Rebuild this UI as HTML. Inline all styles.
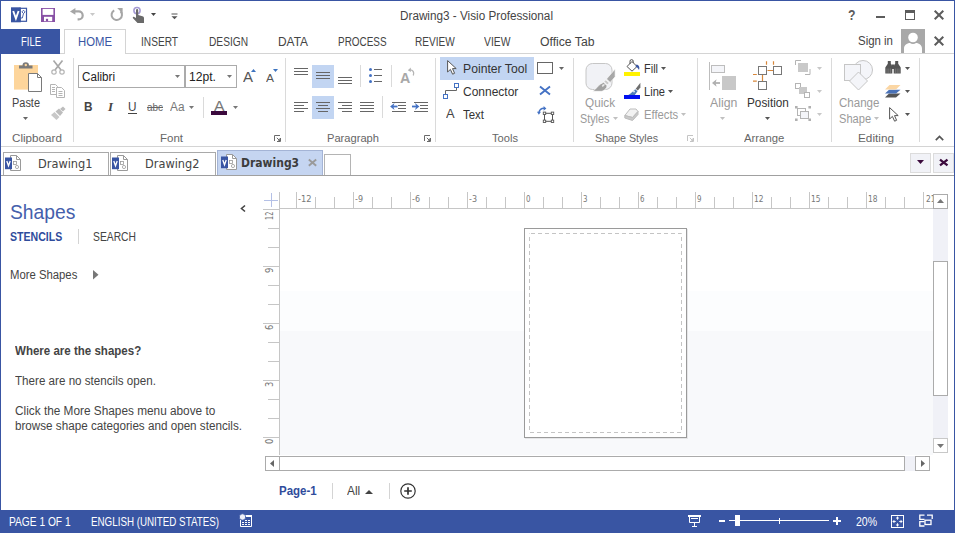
<!DOCTYPE html>
<html lang="en"><head><meta charset="utf-8"><title>Drawing3 - Visio Professional</title>
<style>
html,body{margin:0;padding:0}
body{width:955px;height:533px;overflow:hidden;background:#fff;position:relative;font-family:"Liberation Sans", sans-serif;font-size:12px;color:#444}
body div,body svg,body span{position:absolute;box-sizing:border-box}
svg{overflow:visible;display:block}
.t{white-space:nowrap;line-height:1;transform-origin:0 50%;display:block}
</style></head>
<body>
<div style="left:0px;top:0px;width:955px;height:1px;background:#3955a3"></div>
<div style="left:0px;top:0px;width:1px;height:533px;background:#3955a3"></div>
<div style="left:954px;top:0px;width:1px;height:533px;background:#3955a3"></div>
<svg style="left:11px;top:7px" width="16" height="16" viewBox="0 0 16 16"><rect x="9" y="1.300" width="6.500" height="13" fill="#fff" stroke="#3955a3" stroke-width="1.200"/><path d="M12.500 3.200l1.600 1.700-1.600 1.700-1.600-1.700zM12.500 6.600L11.300 11H9.500" fill="none" stroke="#3955a3" stroke-width="0.900"/><rect x="0" y="0.300" width="9.800" height="15" fill="#3955a3"/><path d="M2.200 4L4.900 11.500 7.600 4" fill="none" stroke="#fff" stroke-width="1.900"/></svg>
<svg style="left:41px;top:8px" width="14" height="14" viewBox="0 0 14 14"><path d="M0 0H14V14H0Z" fill="#8850a5"/><rect x="1.600" y="0.900" width="10.800" height="6" fill="#fff"/><rect x="3" y="8.800" width="8.200" height="4.400" fill="#fff"/><rect x="4.900" y="10.800" width="2.200" height="2.400" fill="#8850a5"/></svg>
<svg style="left:70px;top:8px" width="14" height="13" viewBox="0 0 14 13"><path d="M4 3.400H8.700a4 4 0 0 1 0 8H7.600" fill="none" stroke="#a6a6a6" stroke-width="2.200"/><path d="M0 3.400L5.400 0V6.800Z" fill="#a6a6a6"/></svg>
<svg style="left:90.0px;top:12.5px" width="5" height="3" viewBox="0 0 5 3"><path d="M0 0H5L2.5 3Z" fill="#c8c8c8"/></svg>
<svg style="left:110px;top:8px" width="13" height="13" viewBox="0 0 13 13"><path d="M4.2 2.3A5.2 5.2 0 1 0 10.5 3.2" fill="none" stroke="#a6a6a6" stroke-width="2"/><path d="M7.2 0H12.6V5.4Z" fill="#a6a6a6"/></svg>
<svg style="left:132px;top:7px" width="13" height="16" viewBox="0 0 13 16"><circle cx="5" cy="3.6" r="3.100" fill="none" stroke="#a59bd4" stroke-width="1.600"/><path d="M4 3.2a1.1 1.1 0 0 1 2.2 0V8l4.2 1.2c1.2.4 1.6 1 1.6 2V16H5.5L1 11.2c-.6-.8.2-1.8 1.2-1.2L4 11Z" fill="#6a6a6a"/></svg>
<svg style="left:151.0px;top:13.0px" width="5" height="3" viewBox="0 0 5 3"><path d="M0 0H5L2.5 3Z" fill="#444"/></svg>
<svg style="left:170.5px;top:12.8px" width="7" height="7" viewBox="0 0 7 7"><rect x="0.5" y="0.5" width="6" height="1" fill="#555"/><path d="M0.5 3.2H6.5L3.5 6.2Z" fill="#555"/></svg>
<span class="t" style="left:400px;top:10.00px;font-size:12.5px;color:#444;transform:scaleX(0.9384);">Drawing3 - Visio Professional</span>
<span class="t" style="left:848px;top:8.00px;font-size:14px;color:#5c5c5c;font-weight:700;transform:scaleX(0.8759);">?</span>
<div style="left:876px;top:15.5px;width:9px;height:2px;background:#5c5c5c"></div>
<div style="left:905px;top:10px;width:10px;height:10px;border:1px solid #5c5c5c;border-top-width:3px"></div>
<svg style="left:934px;top:10px" width="10" height="10" viewBox="0 0 10 10"><path d="M0.7 0.7L9.3 9.3M9.3 0.7L0.7 9.3" stroke="#5c5c5c" stroke-width="2" fill="none"/></svg>
<svg style="left:934px;top:36px" width="10" height="10" viewBox="0 0 10 10"><path d="M0.7 0.7L9.3 9.3M9.3 0.7L0.7 9.3" stroke="#5c5c5c" stroke-width="2" fill="none"/></svg>
<div style="left:1px;top:53px;width:953px;height:1px;background:#d4d4d4"></div>
<div style="left:1px;top:29px;width:59px;height:25px;background:#3955a3"></div>
<span class="t" style="left:20.7px;top:36.00px;font-size:12px;color:#fff;transform:scaleX(0.7891);">FILE</span>
<div style="left:64px;top:29px;width:62px;height:25px;background:#fff;border:1px solid #d4d4d4;border-bottom:none"></div>
<span class="t" style="left:77.6px;top:36.00px;font-size:12px;color:#3955a3;transform:scaleX(0.9444);">HOME</span>
<span class="t" style="left:141.4px;top:36.00px;font-size:12px;color:#444;transform:scaleX(0.8448);">INSERT</span>
<span class="t" style="left:208.5px;top:36.00px;font-size:12px;color:#444;transform:scaleX(0.8475);">DESIGN</span>
<span class="t" style="left:277.5px;top:36.00px;font-size:12px;color:#444;transform:scaleX(0.9922);">DATA</span>
<span class="t" style="left:337.6px;top:36.00px;font-size:12px;color:#444;transform:scaleX(0.8281);">PROCESS</span>
<span class="t" style="left:415.2px;top:36.00px;font-size:12px;color:#444;transform:scaleX(0.8385);">REVIEW</span>
<span class="t" style="left:484.3px;top:36.00px;font-size:12px;color:#444;transform:scaleX(0.8607);">VIEW</span>
<span class="t" style="left:540.3px;top:36.00px;font-size:12.5px;color:#444;transform:scaleX(0.9762);">Office Tab</span>
<span class="t" style="left:858.3px;top:35.00px;font-size:12.5px;color:#444;transform:scaleX(0.9154);">Sign in</span>
<svg style="left:901px;top:29px" width="24" height="24" viewBox="0 0 24 24"><rect width="24" height="24" fill="#a8a8a8"/><circle cx="12" cy="8.5" r="4.8" fill="#fff"/><path d="M3 24V19.5C3 15.5 7 14 9 14 10.5 15.3 13.5 15.3 15 14 17 14 21 15.5 21 19.5V24Z" fill="#fff"/></svg>
<div style="left:1px;top:146px;width:953px;height:1px;background:#d4d4d4"></div>
<div style="left:73px;top:58px;width:1px;height:84px;background:#dadada"></div>
<div style="left:285px;top:58px;width:1px;height:84px;background:#dadada"></div>
<div style="left:435px;top:58px;width:1px;height:84px;background:#dadada"></div>
<div style="left:573px;top:58px;width:1px;height:84px;background:#dadada"></div>
<div style="left:697px;top:58px;width:1px;height:84px;background:#dadada"></div>
<div style="left:831px;top:58px;width:1px;height:84px;background:#dadada"></div>
<div style="left:919px;top:58px;width:1px;height:84px;background:#dadada"></div>
<span class="t" style="left:11.5px;top:133.00px;font-size:11px;color:#666;transform:scaleX(1.0617);">Clipboard</span>
<span class="t" style="left:159.9px;top:133.00px;font-size:11px;color:#666;transform:scaleX(1.0447);">Font</span>
<span class="t" style="left:326.7px;top:133.00px;font-size:11px;color:#666;transform:scaleX(1.0122);">Paragraph</span>
<span class="t" style="left:491.5px;top:133.00px;font-size:11px;color:#666;transform:scaleX(1.0122);">Tools</span>
<span class="t" style="left:595.3px;top:133.00px;font-size:11px;color:#666;transform:scaleX(0.9718);">Shape Styles</span>
<span class="t" style="left:744.4px;top:133.00px;font-size:11px;color:#666;transform:scaleX(1.0296);">Arrange</span>
<span class="t" style="left:857.7px;top:133.00px;font-size:11px;color:#666;transform:scaleX(1.0701);">Editing</span>
<svg style="left:274px;top:135px" width="7" height="7" viewBox="0 0 7 7"><path d="M0.5 6V0.5H6" fill="none" stroke="#6a6a6a"/><path d="M6.500 3V6.500H3" fill="none" stroke="#6a6a6a"/><path d="M4 5H6V6H5V4H6" fill="none" stroke="#6a6a6a" stroke-width="0.800"/><path d="M2.800 2.800L6 6" stroke="#6a6a6a" stroke-width="1"/></svg>
<svg style="left:424px;top:135px" width="7" height="7" viewBox="0 0 7 7"><path d="M0.5 6V0.5H6" fill="none" stroke="#6a6a6a"/><path d="M6.500 3V6.500H3" fill="none" stroke="#6a6a6a"/><path d="M4 5H6V6H5V4H6" fill="none" stroke="#6a6a6a" stroke-width="0.800"/><path d="M2.800 2.800L6 6" stroke="#6a6a6a" stroke-width="1"/></svg>
<svg style="left:686.5px;top:135px" width="7" height="7" viewBox="0 0 7 7"><path d="M0.5 6V0.5H6" fill="none" stroke="#c4c4c4"/><path d="M6.500 3V6.500H3" fill="none" stroke="#c4c4c4"/><path d="M4 5H6V6H5V4H6" fill="none" stroke="#c4c4c4" stroke-width="0.800"/><path d="M2.800 2.800L6 6" stroke="#c4c4c4" stroke-width="1"/></svg>
<svg style="left:935px;top:135px" width="9" height="6" viewBox="0 0 9 6"><path d="M0.8 5.2L4.5 1.5 8.2 5.2" fill="none" stroke="#555" stroke-width="1.7"/></svg>
<svg style="left:14px;top:62px" width="28" height="30" viewBox="0 0 28 30"><rect x="0" y="3" width="24" height="24.600" fill="#fdd59b"/><path d="M5 6.5V3.5H8.5A3.2 3.2 0 0 1 15 3.5H18.5V6.5Z" fill="#7a7a7a"/><circle cx="11.8" cy="3" r="1.2" fill="#fdd59b"/><path d="M14.5 11.5H23.5L27.5 15.5V29.500H14.5Z" fill="#fff" stroke="#7a7a7a"/><path d="M23.5 11.5V15.5H27.5" fill="none" stroke="#7a7a7a"/></svg>
<span class="t" style="left:12.3px;top:97.00px;font-size:12.5px;color:#444;transform:scaleX(0.8759);">Paste</span>
<svg style="left:23.0px;top:117.0px" width="5" height="3" viewBox="0 0 5 3"><path d="M0 0H5L2.5 3Z" fill="#666"/></svg>
<svg style="left:51px;top:60px" width="14" height="15" viewBox="0 0 14 15"><path d="M2.5 0.5L10 10M11.5 0.5L4 10" stroke="#a8a8a8" stroke-width="1.700" fill="none"/><circle cx="3" cy="12" r="2.2" fill="none" stroke="#b4b4b4" stroke-width="1.2"/><circle cx="11" cy="12" r="2.2" fill="none" stroke="#b4b4b4" stroke-width="1.2"/></svg>
<svg style="left:50px;top:84px" width="15" height="14" viewBox="0 0 15 14"><path d="M0.5 0.5H5.5L7.5 2.5V10.5H0.5Z" fill="#fff" stroke="#b4b4b4"/><path d="M6.5 3.5H11.5L14.5 6.5V13.5H6.5Z" fill="#fff" stroke="#b4b4b4"/><path d="M2 3.5H5M2 5.5H5M2 7.5H5M8.5 7.5H12.5M8.5 9.5H12.5M8.5 11.5H12.5" stroke="#b4b4b4"/></svg>
<svg style="left:51px;top:106px" width="15" height="14" viewBox="0 0 15 14"><path d="M9 3L12 0.5 14.5 3 12 5.5Z" fill="#bdbdbd"/><path d="M4.5 5.5L8 2.5 12 6.5 9 10Z" fill="#bdbdbd"/><path d="M0 9L3.5 6 8.5 11 5.5 14Z" fill="#c8c8c8"/></svg>
<div style="left:78px;top:65px;width:107px;height:23px;border:1px solid #ababab;background:#fff"></div>
<div style="left:185px;top:65px;width:52px;height:23px;border:1px solid #ababab;background:#fff"></div>
<span class="t" style="left:81.5px;top:71.00px;font-size:12.5px;color:#222;transform:scaleX(0.9312);">Calibri</span>
<svg style="left:174.5px;top:75.0px" width="5" height="3" viewBox="0 0 5 3"><path d="M0 0H5L2.5 3Z" fill="#777"/></svg>
<span class="t" style="left:188.5px;top:71.00px;font-size:12.5px;color:#222;transform:scaleX(0.9708);">12pt.</span>
<svg style="left:226.5px;top:75.0px" width="5" height="3" viewBox="0 0 5 3"><path d="M0 0H5L2.5 3Z" fill="#777"/></svg>
<span class="t" style="left:243.3px;top:70.00px;font-size:14px;color:#555;transform:scaleX(1.0702);">A</span>
<svg style="left:250.5px;top:69px" width="5" height="3" viewBox="0 0 5 3"><path d="M0 3L2.5 0 5 3Z" fill="#3d74c0"/></svg>
<span class="t" style="left:265.8px;top:73.00px;font-size:11px;color:#555;transform:scaleX(1.0894);">A</span>
<svg style="left:272.5px;top:69px" width="5" height="3" viewBox="0 0 5 3"><path d="M0 0H5L2.5 3Z" fill="#3d74c0"/></svg>
<span class="t" style="left:84.3px;top:101.00px;font-size:12.5px;color:#444;font-weight:700;transform:scaleX(0.9412);">B</span>
<span class="t" style="left:108px;top:101.00px;font-size:12.5px;color:#444;transform:scaleX(1.0256);font-style:italic;font-family:'Liberation Serif',serif;font-weight:700;">I</span>
<span class="t" style="left:128.3px;top:101.00px;font-size:12.5px;color:#444;transform:scaleX(0.9412);">U</span>
<div style="left:128px;top:113px;width:9px;height:1px;background:#444"></div>
<span class="t" style="left:147.2px;top:102.00px;font-size:11.5px;color:#666;transform:scaleX(0.8627);text-decoration:line-through;">abc</span>
<span class="t" style="left:169.5px;top:101.00px;font-size:12.5px;color:#777;transform:scaleX(0.9479);">Aa</span>
<svg style="left:188.5px;top:106.0px" width="5" height="3" viewBox="0 0 5 3"><path d="M0 0H5L2.5 3Z" fill="#777"/></svg>
<div style="left:203px;top:97px;width:1px;height:21px;background:#dadada"></div>
<span class="t" style="left:214px;top:99.00px;font-size:14px;color:#777;transform:scaleX(1.1237);">A</span>
<div style="left:211px;top:111px;width:16px;height:4px;background:#3b0a3d"></div>
<svg style="left:233.0px;top:106.0px" width="5" height="3" viewBox="0 0 5 3"><path d="M0 0H5L2.5 3Z" fill="#777"/></svg>
<div style="left:312px;top:65px;width:22px;height:23px;background:#c2d5f2"></div>
<div style="left:312px;top:96px;width:22px;height:23px;background:#c2d5f2"></div>
<div style="left:294px;top:68px;width:14px;height:1px;background:#666"></div><div style="left:294px;top:71px;width:14px;height:1px;background:#666"></div><div style="left:294px;top:74px;width:14px;height:1px;background:#666"></div>
<div style="left:316px;top:72px;width:14px;height:1px;background:#666"></div><div style="left:316px;top:75px;width:14px;height:1px;background:#666"></div><div style="left:316px;top:78px;width:14px;height:1px;background:#666"></div>
<div style="left:338px;top:77px;width:14px;height:1px;background:#666"></div><div style="left:338px;top:80px;width:14px;height:1px;background:#666"></div><div style="left:338px;top:83px;width:14px;height:1px;background:#666"></div>
<div style="left:360px;top:65px;width:1px;height:22px;background:#dadada"></div>
<div style="left:369px;top:68px;width:3px;height:3px;background:#4472c4;border-radius:50%"></div>
<div style="left:374px;top:69px;width:8px;height:1px;background:#666"></div>
<div style="left:369px;top:74px;width:3px;height:3px;background:#4472c4;border-radius:50%"></div>
<div style="left:374px;top:75px;width:8px;height:1px;background:#666"></div>
<div style="left:369px;top:80px;width:3px;height:3px;background:#4472c4;border-radius:50%"></div>
<div style="left:374px;top:81px;width:8px;height:1px;background:#666"></div>
<div style="left:391px;top:65px;width:1px;height:22px;background:#dadada"></div>
<span class="t" style="left:400.3px;top:71.00px;font-size:14.5px;color:#a8a8a8;font-weight:700;transform:scaleX(0.9824);">A</span>
<svg style="left:407px;top:67px" width="8" height="9" viewBox="0 0 8 9"><path d="M6.300 8.500C7.500 5.500 6 2.500 2.500 2.800" fill="none" stroke="#b4b4b4" stroke-width="1.300"/><path d="M0.800 3.200L3.800 0.500V5Z" fill="#b4b4b4"/></svg>
<div style="left:294px;top:102px;width:14px;height:1px;background:#666"></div><div style="left:294px;top:105px;width:10px;height:1px;background:#666"></div><div style="left:294px;top:108px;width:14px;height:1px;background:#666"></div><div style="left:294px;top:111px;width:10px;height:1px;background:#666"></div>
<div style="left:316px;top:102px;width:14px;height:1px;background:#666"></div><div style="left:318px;top:105px;width:10px;height:1px;background:#666"></div><div style="left:316px;top:108px;width:14px;height:1px;background:#666"></div><div style="left:318px;top:111px;width:10px;height:1px;background:#666"></div>
<div style="left:338px;top:102px;width:14px;height:1px;background:#666"></div><div style="left:342px;top:105px;width:10px;height:1px;background:#666"></div><div style="left:338px;top:108px;width:14px;height:1px;background:#666"></div><div style="left:342px;top:111px;width:10px;height:1px;background:#666"></div>
<div style="left:360px;top:102px;width:14px;height:1px;background:#666"></div><div style="left:360px;top:105px;width:14px;height:1px;background:#666"></div><div style="left:360px;top:108px;width:14px;height:1px;background:#666"></div><div style="left:360px;top:111px;width:14px;height:1px;background:#666"></div>
<div style="left:382px;top:96px;width:1px;height:22px;background:#dadada"></div>
<div style="left:392px;top:102px;width:14px;height:1px;background:#666"></div><div style="left:392px;top:111px;width:14px;height:1px;background:#666"></div><div style="left:398px;top:105px;width:8px;height:1px;background:#666"></div><div style="left:398px;top:108px;width:8px;height:1px;background:#666"></div><svg style="left:390px;top:103px" width="8" height="7" viewBox="0 0 8 7"><path d="M7.500 3.500H2.500" fill="none" stroke="#4472c4" stroke-width="1.800"/><path d="M4.500 0L0.100 3.500 4.500 7 3.300 3.500Z" fill="#4472c4"/></svg>
<div style="left:414px;top:102px;width:14px;height:1px;background:#666"></div><div style="left:414px;top:111px;width:14px;height:1px;background:#666"></div><div style="left:420px;top:105px;width:8px;height:1px;background:#666"></div><div style="left:420px;top:108px;width:8px;height:1px;background:#666"></div><svg style="left:412px;top:103px" width="8" height="7" viewBox="0 0 8 7"><path d="M0 3.500H5" fill="none" stroke="#4472c4" stroke-width="1.800"/><path d="M3 0L7.400 3.500 3 7 4.200 3.500Z" fill="#4472c4"/></svg>
<div style="left:440px;top:57px;width:94px;height:23px;background:#c2d5f2"></div>
<svg style="left:447px;top:60px" width="10.0" height="15.0" viewBox="0 0 10 15"><path d="M0.6 0.6V12L3.4 9.4 5.6 14.2 7.6 13.3 5.5 8.6H9.2Z" fill="#fff" stroke="#555" stroke-width="1" stroke-linejoin="round"/></svg>
<span class="t" style="left:462.6px;top:63.00px;font-size:12.5px;color:#333;transform:scaleX(0.9757);">Pointer Tool</span>
<svg style="left:537px;top:62px" width="16" height="12" viewBox="0 0 16 12"><rect x="0.5" y="0.5" width="15" height="11" fill="#fff" stroke="#666"/></svg>
<svg style="left:559.0px;top:66.5px" width="5" height="3" viewBox="0 0 5 3"><path d="M0 0H5L2.5 3Z" fill="#666"/></svg>
<svg style="left:443px;top:83px" width="16" height="16" viewBox="0 0 16 16"><path d="M2.5 11.5V7.5H13.5V4.5" fill="none" stroke="#666"/><rect x="11.5" y="0.5" width="4" height="4" fill="#fff" stroke="#4472c4"/><rect x="0.5" y="11.5" width="4" height="4" fill="#fff" stroke="#4472c4"/></svg>
<span class="t" style="left:462.6px;top:86.00px;font-size:12.5px;color:#333;transform:scaleX(0.9586);">Connector</span>
<svg style="left:539px;top:86px" width="12" height="9" viewBox="0 0 12 9"><path d="M1 0.5L11 8.5M11 0.5L1 8.5" stroke="#4472c4" stroke-width="1.9" fill="none"/></svg>
<span class="t" style="left:446.4px;top:108.00px;font-size:12px;color:#444;transform:scaleX(1.0729);">A</span>
<span class="t" style="left:462.6px;top:109.00px;font-size:12.5px;color:#333;transform:scaleX(0.9155);">Text</span>
<svg style="left:537px;top:106px" width="17" height="17" viewBox="0 0 17 17"><rect x="7.500" y="7.300" width="8" height="8" fill="none" stroke="#555"/><rect x="6.3" y="6.1" width="2.400" height="2.400" fill="#fff" stroke="#555" stroke-width="0.9"/><rect x="6.3" y="14.1" width="2.400" height="2.400" fill="#fff" stroke="#555" stroke-width="0.9"/><rect x="14.3" y="6.1" width="2.400" height="2.400" fill="#fff" stroke="#555" stroke-width="0.9"/><rect x="14.3" y="14.1" width="2.400" height="2.400" fill="#fff" stroke="#555" stroke-width="0.9"/><path d="M1.900 6.500A5.300 5.300 0 0 1 7 2.300" fill="none" stroke="#4472c4" stroke-width="1.400"/><path d="M0 5.800H4L1.800 8.800Z" fill="#4472c4"/><path d="M6.600 0L9.400 2.400 6.600 4.700Z" fill="#4472c4"/></svg>
<svg style="left:585px;top:63px" width="31" height="30" viewBox="0 0 31 30"><rect x="1" y="0.5" width="26" height="26" rx="6.500" fill="#f1f2f6" stroke="#c6c6c6"/><path d="M30.100 6.100V13.800L25.200 19.400 21.500 16Z" fill="#a8a8a8" stroke="#fff" stroke-width="0.600"/><path d="M20.800 16.700L24.300 20 22.300 22 19 18.600Z" fill="#c9c9c9" stroke="#fff" stroke-width="0.700"/><path d="M15.300 21.200L18.600 19.300 22 22.800C22 25 20 27 17 28.300H7.600C11 26.500 12.500 23 15.300 21.200Z" fill="#a2a2a2" stroke="#fff" stroke-width="0.600"/><ellipse cx="18.300" cy="22.300" rx="1.700" ry="1" transform="rotate(-40 18.300 22.300)" fill="#e6e6e6"/></svg>
<span class="t" style="left:584.6px;top:97.00px;font-size:12.5px;color:#9a9a9a;transform:scaleX(0.9389);">Quick</span>
<span class="t" style="left:580.2px;top:113.00px;font-size:12.5px;color:#9a9a9a;transform:scaleX(0.8635);">Styles</span>
<svg style="left:613.0px;top:116.5px" width="5" height="3" viewBox="0 0 5 3"><path d="M0 0H5L2.5 3Z" fill="#c0c0c0"/></svg>
<svg style="left:624px;top:59px" width="17" height="18" viewBox="0 0 17 18"><rect x="0" y="13" width="16" height="4" fill="#fff200"/><path d="M3 7.5L8 2.5 13 7.5 8 12.2Z" fill="#fff" stroke="#555"/><path d="M6 5V2.2A1.6 1.6 0 0 1 9.2 2.2V4" fill="none" stroke="#555"/><path d="M12.5 5.5C15 6 16 8.5 15 11 14 9 13 8 11.5 7.5Z" fill="#3955a3"/></svg>
<span class="t" style="left:643.6px;top:63.00px;font-size:12.5px;color:#333;transform:scaleX(0.8767);">Fill</span>
<svg style="left:661.1px;top:66.5px" width="5" height="3" viewBox="0 0 5 3"><path d="M0 0H5L2.5 3Z" fill="#555"/></svg>
<svg style="left:624px;top:82px" width="17" height="18" viewBox="0 0 17 18"><rect x="0" y="13" width="16" height="4" fill="#0010f0"/><path d="M16.400 0.800V5.500L13.800 8.600 11.700 6.800Z" fill="#6e6e6e"/><path d="M11.200 7.300L13.500 9.300 10.800 13H4.300C6.500 12 8.800 9.500 11.200 7.300Z" fill="#4d7cb8"/><circle cx="10" cy="9.600" r="1" fill="#dfe8f5"/></svg>
<span class="t" style="left:643.6px;top:86.00px;font-size:12.5px;color:#333;transform:scaleX(0.8883);">Line</span>
<svg style="left:667.9px;top:90.0px" width="5" height="3" viewBox="0 0 5 3"><path d="M0 0H5L2.5 3Z" fill="#555"/></svg>
<svg style="left:624px;top:108px" width="15" height="13" viewBox="0 0 15 13"><path d="M0.8 7.5L6 1H12L14 3.5 8.5 9.5Z" fill="#f2f2f2" stroke="#bdbdbd"/><path d="M0.8 7.5L8.5 9.5 14 3.5V6.5L8.5 12.5 0.8 10Z" fill="#c9c9c9" stroke="#bdbdbd"/></svg>
<span class="t" style="left:643.6px;top:109.00px;font-size:12.5px;color:#9a9a9a;transform:scaleX(0.9004);">Effects</span>
<svg style="left:681.0px;top:112.5px" width="5" height="3" viewBox="0 0 5 3"><path d="M0 0H5L2.5 3Z" fill="#c0c0c0"/></svg>
<div style="left:709px;top:62px;width:1px;height:28px;background:#bdbdbd"></div>
<div style="left:711px;top:65px;width:14px;height:8px;border:1px solid #bdbdbd;background:#f4f5f9"></div>
<div style="left:722px;top:76px;width:14px;height:14px;background:#c8c8c8"></div>
<svg style="left:712px;top:79px" width="8" height="8" viewBox="0 0 8 8"><path d="M8 4H2.500" fill="none" stroke="#b0b0b0" stroke-width="1.800"/><path d="M0 4L4.600 0.300 3.600 4 4.600 7.700Z" fill="#b0b0b0"/></svg>
<span class="t" style="left:709.6px;top:97.00px;font-size:12.5px;color:#9a9a9a;transform:scaleX(0.9821);">Align</span>
<svg style="left:719.8px;top:116.8px" width="5" height="3" viewBox="0 0 5 3"><path d="M0 0H5L2.5 3Z" fill="#c0c0c0"/></svg>
<svg style="left:753px;top:60px" width="30" height="30" viewBox="0 0 30 30"><path d="M13.5 1.200V4.800M20.5 1.200V4.800M0 14.500H3.800M0 21.200H3.800M9.5 15V21M14.5 10.5H20" stroke="#d8873a" fill="none" stroke-width="1.2"/><rect x="5.5" y="6.5" width="8" height="8" fill="#fff" stroke="#777"/><rect x="20.5" y="6.5" width="8" height="8" fill="#fff" stroke="#777"/><rect x="5.5" y="21.5" width="8" height="8" fill="#fff" stroke="#777"/></svg>
<span class="t" style="left:746.7px;top:97.00px;font-size:12.5px;color:#333;transform:scaleX(0.9419);">Position</span>
<svg style="left:764.7px;top:116.8px" width="5" height="3" viewBox="0 0 5 3"><path d="M0 0H5L2.5 3Z" fill="#555"/></svg>
<svg style="left:795px;top:60px" width="16" height="15" viewBox="0 0 16 15"><rect x="3" y="3" width="10" height="9" fill="#c9c9c9"/><path d="M0.5 5V0.5H6M15 9V14.5H10" fill="none" stroke="#b4b4b4"/></svg>
<svg style="left:816.7px;top:66.5px" width="5" height="3" viewBox="0 0 5 3"><path d="M0 0H5L2.5 3Z" fill="#c8c8c8"/></svg>
<svg style="left:795px;top:83px" width="16" height="15" viewBox="0 0 16 15"><rect x="0.5" y="0.5" width="5" height="5" fill="#fff" stroke="#b4b4b4"/><rect x="4" y="4" width="8" height="7" fill="#c9c9c9"/><rect x="9.5" y="9.5" width="5" height="5" fill="#fff" stroke="#b4b4b4"/></svg>
<svg style="left:816.7px;top:89.5px" width="5" height="3" viewBox="0 0 5 3"><path d="M0 0H5L2.5 3Z" fill="#c8c8c8"/></svg>
<svg style="left:795px;top:106px" width="16" height="15" viewBox="0 0 16 15"><rect x="2.5" y="2.500" width="8" height="7" fill="none" stroke="#b4b4b4"/><rect x="5.5" y="5.5" width="8" height="7" fill="#f4f5f9" stroke="#b4b4b4"/><path d="M0 0H2.600V2.600H0ZM13.400 0H16V2.600H13.400ZM0 12.400H2.600V15H0ZM13.400 12.400H16V15H13.400Z" fill="#b0b0b0"/></svg>
<svg style="left:816.7px;top:112.5px" width="5" height="3" viewBox="0 0 5 3"><path d="M0 0H5L2.5 3Z" fill="#c8c8c8"/></svg>
<svg style="left:844px;top:60px" width="30" height="31" viewBox="0 0 30 31"><circle cx="19" cy="10" r="9.500" fill="#f4f5f9" stroke="#c6c6c6"/><rect x="0.5" y="4.500" width="16" height="16" fill="#f4f5f9" stroke="#c6c6c6"/><path d="M14.5 12L23.500 21 14.5 30 5.500 21Z" fill="#f4f5f9" stroke="#c6c6c6"/></svg>
<span class="t" style="left:838.7px;top:97.00px;font-size:12.5px;color:#9a9a9a;transform:scaleX(0.9224);">Change</span>
<span class="t" style="left:839.2px;top:113.00px;font-size:12.5px;color:#9a9a9a;transform:scaleX(0.8878);">Shape</span>
<svg style="left:874.0px;top:116.5px" width="5" height="3" viewBox="0 0 5 3"><path d="M0 0H5L2.5 3Z" fill="#c0c0c0"/></svg>
<svg style="left:885px;top:61px" width="16" height="13" viewBox="0 0 16 13"><path d="M2.800 0H5.800V2.500L7.300 5.500V12.600H0.300V6.500L2.800 2.800ZM10.200 0H13.200V2.800L15.700 6.500V12.600H8.700V5.500L10.200 2.500Z" fill="#555"/><rect x="6.500" y="3.500" width="3" height="4.500" fill="#555"/><path d="M2 7.500V12M3.800 7.500V12M5.600 7.500V12M10.400 7.500V12M12.200 7.500V12M14 7.500V12" stroke="#8a8a8a" stroke-width="0.600"/></svg>
<svg style="left:905.2px;top:66.5px" width="5" height="3" viewBox="0 0 5 3"><path d="M0 0H5L2.5 3Z" fill="#555"/></svg>
<svg style="left:885px;top:85px" width="16" height="13" viewBox="0 0 16 13"><path d="M4 8.500H15.500L11 12.500H0Z" fill="#555"/><path d="M4 4.800H15.500L11 8.600H0Z" fill="#4a72b8"/><path d="M4.500 0H15.500L11 4.600H0Z" fill="#fbd6a3"/></svg>
<svg style="left:905.2px;top:90.0px" width="5" height="3" viewBox="0 0 5 3"><path d="M0 0H5L2.5 3Z" fill="#555"/></svg>
<svg style="left:889px;top:106.5px" width="10.0" height="15.0" viewBox="0 0 10 15"><path d="M0.6 0.6V12L3.4 9.4 5.6 14.2 7.6 13.3 5.5 8.6H9.2Z" fill="#fff" stroke="#555" stroke-width="1" stroke-linejoin="round"/></svg>
<svg style="left:905.2px;top:112.5px" width="5" height="3" viewBox="0 0 5 3"><path d="M0 0H5L2.5 3Z" fill="#555"/></svg>
<div style="left:3px;top:152px;width:106px;height:24px;border:1px solid #a9a9a9;border-bottom:none;background:#fff"></div>
<svg style="left:5px;top:155px" width="16" height="16" viewBox="0 0 16 16"><path d="M5.5 0.5H11.5L15.5 4.500V15.500H5.5Z" fill="#fff" stroke="#9a9a9a"/><path d="M11.5 0.5V4.500H15.500" fill="none" stroke="#9a9a9a"/><rect x="8.500" y="6.500" width="3" height="3" fill="none" stroke="#9a9a9a" stroke-width="0.8"/><circle cx="12" cy="12" r="1.600" fill="none" stroke="#9a9a9a" stroke-width="0.8"/><rect x="0" y="2.500" width="7" height="11.700" fill="#3955a3"/><path d="M1.800 6L3.500 10.800 5.200 6" fill="none" stroke="#fff" stroke-width="1.300"/></svg>
<span class="t" style="left:37.8px;top:159.00px;font-size:11.5px;color:#444;transform:scaleX(0.9884);font-family:'DejaVu Sans','Liberation Sans',sans-serif;">Drawing1</span>
<div style="left:110px;top:152px;width:106px;height:24px;border:1px solid #a9a9a9;border-bottom:none;background:#fff"></div>
<svg style="left:112px;top:155px" width="16" height="16" viewBox="0 0 16 16"><path d="M5.5 0.5H11.5L15.5 4.500V15.500H5.5Z" fill="#fff" stroke="#9a9a9a"/><path d="M11.5 0.5V4.500H15.500" fill="none" stroke="#9a9a9a"/><rect x="8.500" y="6.500" width="3" height="3" fill="none" stroke="#9a9a9a" stroke-width="0.8"/><circle cx="12" cy="12" r="1.600" fill="none" stroke="#9a9a9a" stroke-width="0.8"/><rect x="0" y="2.500" width="7" height="11.700" fill="#3955a3"/><path d="M1.800 6L3.500 10.800 5.200 6" fill="none" stroke="#fff" stroke-width="1.300"/></svg>
<span class="t" style="left:144.8px;top:159.00px;font-size:11.5px;color:#444;transform:scaleX(0.9884);font-family:'DejaVu Sans','Liberation Sans',sans-serif;">Drawing2</span>
<div style="left:217px;top:150px;width:106px;height:26px;border:1px solid #a4b4d6;border-bottom:none;background:#c5d5f1"></div>
<svg style="left:221px;top:154px" width="16" height="16" viewBox="0 0 16 16"><path d="M5.5 0.5H11.5L15.5 4.500V15.500H5.5Z" fill="#fff" stroke="#9a9a9a"/><path d="M11.5 0.5V4.500H15.500" fill="none" stroke="#9a9a9a"/><rect x="8.500" y="6.500" width="3" height="3" fill="none" stroke="#9a9a9a" stroke-width="0.8"/><circle cx="12" cy="12" r="1.600" fill="none" stroke="#9a9a9a" stroke-width="0.8"/><rect x="0" y="2.500" width="7" height="11.700" fill="#3955a3"/><path d="M1.800 6L3.500 10.800 5.200 6" fill="none" stroke="#fff" stroke-width="1.300"/></svg>
<span class="t" style="left:240.7px;top:158.00px;font-size:11.5px;color:#3c3c3c;font-weight:700;transform:scaleX(0.9376);font-family:'DejaVu Sans','Liberation Sans',sans-serif;">Drawing3</span>
<svg style="left:308.2px;top:159px" width="9" height="7.2" viewBox="0 0 9 7.2"><path d="M0.800 0.500L8.200 6.700M8.200 0.500L0.800 6.700" stroke="#9a9a9a" stroke-width="1.900" fill="none"/></svg>
<div style="left:324px;top:154px;width:27px;height:22px;border:1px solid #b4b4b4;border-bottom:none;background:#fff"></div>
<div style="left:1px;top:175px;width:953px;height:1px;background:#a0a0a0"></div>
<div style="left:910px;top:153px;width:21px;height:20px;border:1px solid #dcdcdc;background:#f1f2f7"></div>
<svg style="left:917px;top:160px" width="7" height="4" viewBox="0 0 7 4"><path d="M0 0H7L3.500 4Z" fill="#3b0a3d"/></svg>
<div style="left:933px;top:153px;width:21px;height:20px;border:1px solid #dcdcdc;background:#f1f2f7"></div>
<svg style="left:939px;top:159px" width="9.5" height="7" viewBox="0 0 9.5 7"><path d="M1 0.6L8.500 6.400M8.500 0.6L1 6.400" stroke="#3b0a3d" stroke-width="2.300" fill="none"/></svg>
<span class="t" style="left:10.3px;top:202.00px;font-size:20.5px;color:#4560ac;transform:scaleX(0.9406);">Shapes</span>
<svg style="left:240px;top:205px" width="6" height="7" viewBox="0 0 6 7"><path d="M5 0.5L1.500 3.500 5 6.500" fill="none" stroke="#444" stroke-width="1.600"/></svg>
<span class="t" style="left:10.3px;top:231.00px;font-size:12px;color:#2f4c9c;font-weight:700;transform:scaleX(0.8813);">STENCILS</span>
<div style="left:78px;top:229px;width:1px;height:15px;background:#d4d4d4"></div>
<span class="t" style="left:93.1px;top:231.00px;font-size:12px;color:#444;transform:scaleX(0.8597);">SEARCH</span>
<span class="t" style="left:9.5px;top:269.00px;font-size:12.5px;color:#444;transform:scaleX(0.9051);">More Shapes</span>
<svg style="left:92.5px;top:270px" width="6" height="10" viewBox="0 0 6 10"><path d="M0 0L5.500 4.700 0 9.400Z" fill="#777"/></svg>
<span class="t" style="left:14.8px;top:345.00px;font-size:12.5px;color:#444;font-weight:700;transform:scaleX(0.9221);">Where are the shapes?</span>
<span class="t" style="left:14.8px;top:375.00px;font-size:12.5px;color:#444;transform:scaleX(0.9301);">There are no stencils open.</span>
<span class="t" style="left:14.8px;top:405.00px;font-size:12.5px;color:#444;transform:scaleX(0.9452);">Click the More Shapes menu above to</span>
<span class="t" style="left:14.8px;top:420.00px;font-size:12.5px;color:#444;transform:scaleX(0.9333);">browse shape categories and open stencils.</span>
<div style="left:280px;top:209px;width:653px;height:246px;background:#fff"></div>
<div style="left:280px;top:291px;width:653px;height:40px;background:#fcfdfe"></div>
<div style="left:280px;top:331px;width:653px;height:124px;background:#f8f9fb"></div>
<div style="left:524px;top:228px;width:163px;height:210px;border:1px solid #9a9a9a;background:#fff;box-shadow:1px 1px 0 #e6e6e8"></div>
<svg style="left:529px;top:233px" width="153" height="200" viewBox="0 0 153 200"><rect x="0.5" y="0.5" width="152" height="199" fill="none" stroke="#c4c4c4" stroke-dasharray="4 3" stroke-dashoffset="-1.500"/></svg>
<div style="left:280px;top:208px;width:653px;height:1px;background:#c6c6c6"></div>
<div style="left:279px;top:192px;width:1px;height:263px;background:#c6c6c6"></div>
<div style="left:264px;top:200px;width:14px;height:1px;background:#b4c0e6"></div>
<div style="left:271px;top:193px;width:1px;height:14px;background:#b4c0e6"></div>
<div style="left:296px;top:192px;width:1px;height:16px;background:#c6c6c6"></div>
<div style="left:315px;top:197px;width:1px;height:11px;background:#c6c6c6"></div>
<div style="left:334px;top:197px;width:1px;height:11px;background:#c6c6c6"></div>
<div style="left:353px;top:192px;width:1px;height:16px;background:#c6c6c6"></div>
<div style="left:372px;top:197px;width:1px;height:11px;background:#c6c6c6"></div>
<div style="left:391px;top:197px;width:1px;height:11px;background:#c6c6c6"></div>
<div style="left:410px;top:192px;width:1px;height:16px;background:#c6c6c6"></div>
<div style="left:429px;top:197px;width:1px;height:11px;background:#c6c6c6"></div>
<div style="left:448px;top:197px;width:1px;height:11px;background:#c6c6c6"></div>
<div style="left:467px;top:192px;width:1px;height:16px;background:#c6c6c6"></div>
<div style="left:486px;top:197px;width:1px;height:11px;background:#c6c6c6"></div>
<div style="left:505px;top:197px;width:1px;height:11px;background:#c6c6c6"></div>
<div style="left:524px;top:192px;width:1px;height:16px;background:#c6c6c6"></div>
<div style="left:543px;top:197px;width:1px;height:11px;background:#c6c6c6"></div>
<div style="left:562px;top:197px;width:1px;height:11px;background:#c6c6c6"></div>
<div style="left:581px;top:192px;width:1px;height:16px;background:#c6c6c6"></div>
<div style="left:600px;top:197px;width:1px;height:11px;background:#c6c6c6"></div>
<div style="left:619px;top:197px;width:1px;height:11px;background:#c6c6c6"></div>
<div style="left:638px;top:192px;width:1px;height:16px;background:#c6c6c6"></div>
<div style="left:657px;top:197px;width:1px;height:11px;background:#c6c6c6"></div>
<div style="left:676px;top:197px;width:1px;height:11px;background:#c6c6c6"></div>
<div style="left:695px;top:192px;width:1px;height:16px;background:#c6c6c6"></div>
<div style="left:714px;top:197px;width:1px;height:11px;background:#c6c6c6"></div>
<div style="left:733px;top:197px;width:1px;height:11px;background:#c6c6c6"></div>
<div style="left:752px;top:192px;width:1px;height:16px;background:#c6c6c6"></div>
<div style="left:771px;top:197px;width:1px;height:11px;background:#c6c6c6"></div>
<div style="left:790px;top:197px;width:1px;height:11px;background:#c6c6c6"></div>
<div style="left:809px;top:192px;width:1px;height:16px;background:#c6c6c6"></div>
<div style="left:828px;top:197px;width:1px;height:11px;background:#c6c6c6"></div>
<div style="left:847px;top:197px;width:1px;height:11px;background:#c6c6c6"></div>
<div style="left:866px;top:192px;width:1px;height:16px;background:#c6c6c6"></div>
<div style="left:885px;top:197px;width:1px;height:11px;background:#c6c6c6"></div>
<div style="left:904px;top:197px;width:1px;height:11px;background:#c6c6c6"></div>
<div style="left:923px;top:192px;width:1px;height:16px;background:#c6c6c6"></div>
<span class="t" style="left:298.2px;top:195.00px;font-size:9px;color:#777;transform:scaleX(0.9182);font-family:'DejaVu Sans','Liberation Sans',sans-serif;">-12</span>
<span class="t" style="left:355.2px;top:195.00px;font-size:9px;color:#777;transform:scaleX(0.8904);font-family:'DejaVu Sans','Liberation Sans',sans-serif;">-9</span>
<span class="t" style="left:412.2px;top:195.00px;font-size:9px;color:#777;transform:scaleX(0.8904);font-family:'DejaVu Sans','Liberation Sans',sans-serif;">-6</span>
<span class="t" style="left:469.2px;top:195.00px;font-size:9px;color:#777;transform:scaleX(0.8904);font-family:'DejaVu Sans','Liberation Sans',sans-serif;">-3</span>
<span class="t" style="left:526.2px;top:195.00px;font-size:9px;color:#777;transform:scaleX(0.7847);font-family:'DejaVu Sans','Liberation Sans',sans-serif;">0</span>
<span class="t" style="left:583.2px;top:195.00px;font-size:9px;color:#777;transform:scaleX(0.7847);font-family:'DejaVu Sans','Liberation Sans',sans-serif;">3</span>
<span class="t" style="left:640.2px;top:195.00px;font-size:9px;color:#777;transform:scaleX(0.7847);font-family:'DejaVu Sans','Liberation Sans',sans-serif;">6</span>
<span class="t" style="left:697.2px;top:195.00px;font-size:9px;color:#777;transform:scaleX(0.7847);font-family:'DejaVu Sans','Liberation Sans',sans-serif;">9</span>
<span class="t" style="left:754.2px;top:195.00px;font-size:9px;color:#777;transform:scaleX(0.8295);font-family:'DejaVu Sans','Liberation Sans',sans-serif;">12</span>
<span class="t" style="left:811.2px;top:195.00px;font-size:9px;color:#777;transform:scaleX(0.8295);font-family:'DejaVu Sans','Liberation Sans',sans-serif;">15</span>
<span class="t" style="left:868.2px;top:195.00px;font-size:9px;color:#777;transform:scaleX(0.8295);font-family:'DejaVu Sans','Liberation Sans',sans-serif;">18</span>
<div style="left:926px;top:190px;width:7.5px;height:18px;overflow:hidden"><span class="t" style="left:0px;top:5.00px;font-size:9px;color:#777;transform:scaleX(0.8295);font-family:'DejaVu Sans','Liberation Sans',sans-serif;">21</span></div>
<div style="left:263px;top:437px;width:16px;height:1px;background:#c6c6c6"></div>
<div style="left:268px;top:418px;width:11px;height:1px;background:#c6c6c6"></div>
<div style="left:268px;top:399px;width:11px;height:1px;background:#c6c6c6"></div>
<div style="left:263px;top:380px;width:16px;height:1px;background:#c6c6c6"></div>
<div style="left:268px;top:361px;width:11px;height:1px;background:#c6c6c6"></div>
<div style="left:268px;top:342px;width:11px;height:1px;background:#c6c6c6"></div>
<div style="left:263px;top:323px;width:16px;height:1px;background:#c6c6c6"></div>
<div style="left:268px;top:304px;width:11px;height:1px;background:#c6c6c6"></div>
<div style="left:268px;top:285px;width:11px;height:1px;background:#c6c6c6"></div>
<div style="left:263px;top:266px;width:16px;height:1px;background:#c6c6c6"></div>
<div style="left:268px;top:247px;width:11px;height:1px;background:#c6c6c6"></div>
<div style="left:268px;top:228px;width:11px;height:1px;background:#c6c6c6"></div>
<div style="left:263px;top:209px;width:16px;height:1px;background:#c6c6c6"></div>
<div style="left:264.5px;top:219.60000000000002px;width:0;height:0;transform:rotate(-90deg);transform-origin:0 0"><span class="t" style="left:0px;top:0.00px;font-size:10px;color:#777;transform:scaleX(0.6518);font-family:'DejaVu Sans','Liberation Sans',sans-serif;">12</span></div>
<div style="left:264.5px;top:272.8px;width:0;height:0;transform:rotate(-90deg);transform-origin:0 0"><span class="t" style="left:0px;top:0.00px;font-size:10px;color:#777;transform:scaleX(0.8314);font-family:'DejaVu Sans','Liberation Sans',sans-serif;">9</span></div>
<div style="left:264.5px;top:329.8px;width:0;height:0;transform:rotate(-90deg);transform-origin:0 0"><span class="t" style="left:0px;top:0.00px;font-size:10px;color:#777;transform:scaleX(0.8314);font-family:'DejaVu Sans','Liberation Sans',sans-serif;">6</span></div>
<div style="left:264.5px;top:386.8px;width:0;height:0;transform:rotate(-90deg);transform-origin:0 0"><span class="t" style="left:0px;top:0.00px;font-size:10px;color:#777;transform:scaleX(0.8314);font-family:'DejaVu Sans','Liberation Sans',sans-serif;">3</span></div>
<div style="left:264.5px;top:443.8px;width:0;height:0;transform:rotate(-90deg);transform-origin:0 0"><span class="t" style="left:0px;top:0.00px;font-size:10px;color:#777;transform:scaleX(0.8314);font-family:'DejaVu Sans','Liberation Sans',sans-serif;">0</span></div>
<div style="left:933px;top:194px;width:15px;height:259px;background:#f0f1f7"></div>
<div style="left:933px;top:194px;width:15px;height:15px;border:1px solid #ababab;background:#fff"></div>
<svg style="left:937px;top:199px" width="7" height="4" viewBox="0 0 7 4"><path d="M0 4L3.500 0 7 4Z" fill="#777"/></svg>
<div style="left:933px;top:261px;width:15px;height:135px;border:1px solid #ababab;background:#fff"></div>
<div style="left:933px;top:438px;width:15px;height:15px;border:1px solid #c8c8c8;background:#fff"></div>
<svg style="left:937px;top:444px" width="7" height="4" viewBox="0 0 7 4"><path d="M0 0H7L3.500 4Z" fill="#777"/></svg>
<div style="left:265px;top:456px;width:665px;height:15px;background:#f0f1f7"></div>
<div style="left:265px;top:456px;width:15px;height:15px;border:1px solid #ababab;background:#fff"></div>
<svg style="left:270px;top:460px" width="4" height="7" viewBox="0 0 4 7"><path d="M4 0V7L0 3.500Z" fill="#666"/></svg>
<div style="left:279px;top:456px;width:626px;height:15px;border:1px solid #ababab;background:#fff"></div>
<div style="left:915px;top:456px;width:15px;height:15px;border:1px solid #ababab;background:#fff"></div>
<svg style="left:921px;top:460px" width="4" height="7" viewBox="0 0 4 7"><path d="M0 0V7L4 3.500Z" fill="#666"/></svg>
<span class="t" style="left:278.5px;top:485.00px;font-size:12.5px;color:#2f4c9c;font-weight:700;transform:scaleX(0.9195);">Page-1</span>
<div style="left:332px;top:483px;width:1px;height:16px;background:#d4d4d4"></div>
<span class="t" style="left:347.1px;top:485.00px;font-size:12.5px;color:#444;transform:scaleX(0.9492);">All</span>
<svg style="left:365px;top:490px" width="8" height="4" viewBox="0 0 8 4"><path d="M0 4L4 0 8 4Z" fill="#444"/></svg>
<div style="left:389px;top:483px;width:1px;height:16px;background:#d4d4d4"></div>
<svg style="left:400px;top:483px" width="16" height="16" viewBox="0 0 16 16"><circle cx="8" cy="8" r="7.200" fill="#fff" stroke="#333" stroke-width="1.200"/><path d="M8 4.200V11.800M4.200 8H11.800" stroke="#333" stroke-width="1.700"/></svg>
<div style="left:0px;top:510px;width:955px;height:23px;background:#3955a3"></div>
<span class="t" style="left:8.5px;top:516.00px;font-size:12px;color:#fff;transform:scaleX(0.8500);">PAGE 1 OF 1</span>
<span class="t" style="left:90.5px;top:516.00px;font-size:12px;color:#fff;transform:scaleX(0.8158);">ENGLISH (UNITED STATES)</span>
<svg style="left:240px;top:514px" width="13" height="13" viewBox="0 0 13 13"><path d="M0.5 5V12.500H11.500V1.500H5" fill="none" stroke="#fff" stroke-width="1"/><rect x="5" y="1" width="7" height="2" fill="#fff"/><rect x="5" y="6" width="2" height="1" fill="#fff"/><rect x="8" y="6" width="2" height="1" fill="#fff"/><rect x="2" y="8" width="2" height="1" fill="#fff"/><rect x="5" y="8" width="2" height="1" fill="#fff"/><rect x="8" y="8" width="2" height="1" fill="#fff"/><rect x="2" y="10" width="2" height="1" fill="#fff"/><rect x="5" y="10" width="2" height="1" fill="#fff"/><rect x="8" y="10" width="2" height="1" fill="#fff"/><circle cx="2.500" cy="3" r="3.200" fill="#eef0fa" stroke="#3955a3" stroke-width="0.800"/></svg>
<svg style="left:688px;top:515px" width="13" height="12" viewBox="0 0 13 12"><rect x="0" y="0" width="13" height="2" fill="#fff"/><path d="M1.500 2V7.500H11.500V2" fill="none" stroke="#fff" stroke-width="1"/><rect x="3" y="3" width="7" height="1" fill="#fff"/><rect x="6" y="8" width="1" height="3" fill="#fff"/><rect x="4" y="11" width="5" height="1" fill="#fff"/></svg>
<div style="left:719px;top:519.5px;width:6px;height:2.5px;background:#fff"></div>
<div style="left:729px;top:520px;width:100px;height:1px;background:#fff"></div>
<div style="left:779px;top:518px;width:1px;height:6px;background:#fff"></div>
<div style="left:734.5px;top:515px;width:5px;height:11px;background:#fff"></div>
<div style="left:833px;top:520px;width:8px;height:2px;background:#fff"></div>
<div style="left:836px;top:517px;width:2px;height:8px;background:#fff"></div>
<span class="t" style="left:856.2px;top:516.00px;font-size:12px;color:#fff;transform:scaleX(0.8780);">20%</span>
<svg style="left:891px;top:515px" width="13" height="13" viewBox="0 0 13 13"><rect x="0.5" y="0.5" width="12" height="12" fill="none" stroke="#fff"/><path d="M6.500 2V4.800M6.500 8.200V11M2 6.500H4.800M8.200 6.500H11" stroke="#fff" stroke-width="0.9"/><path d="M6.500 1.300L8.200 3.400H4.800ZM6.500 11.700L8.200 9.600H4.800ZM1.300 6.500L3.400 4.800V8.200ZM11.700 6.500L9.600 4.800V8.200Z" fill="#fff"/></svg>
<svg style="left:919px;top:514px" width="14" height="13" viewBox="0 0 14 13"><path d="M5.500 1.200H0.800V5.300H5.500M5.500 7.600H0.800V12H5.500" fill="none" stroke="#fff" stroke-width="1.300"/><rect x="6" y="6.200" width="6" height="4.300" fill="none" stroke="#fff" stroke-width="1.300"/><path d="M8 1.200H13.200V5" fill="none" stroke="#fff" stroke-width="1.300"/></svg>
</body></html>
